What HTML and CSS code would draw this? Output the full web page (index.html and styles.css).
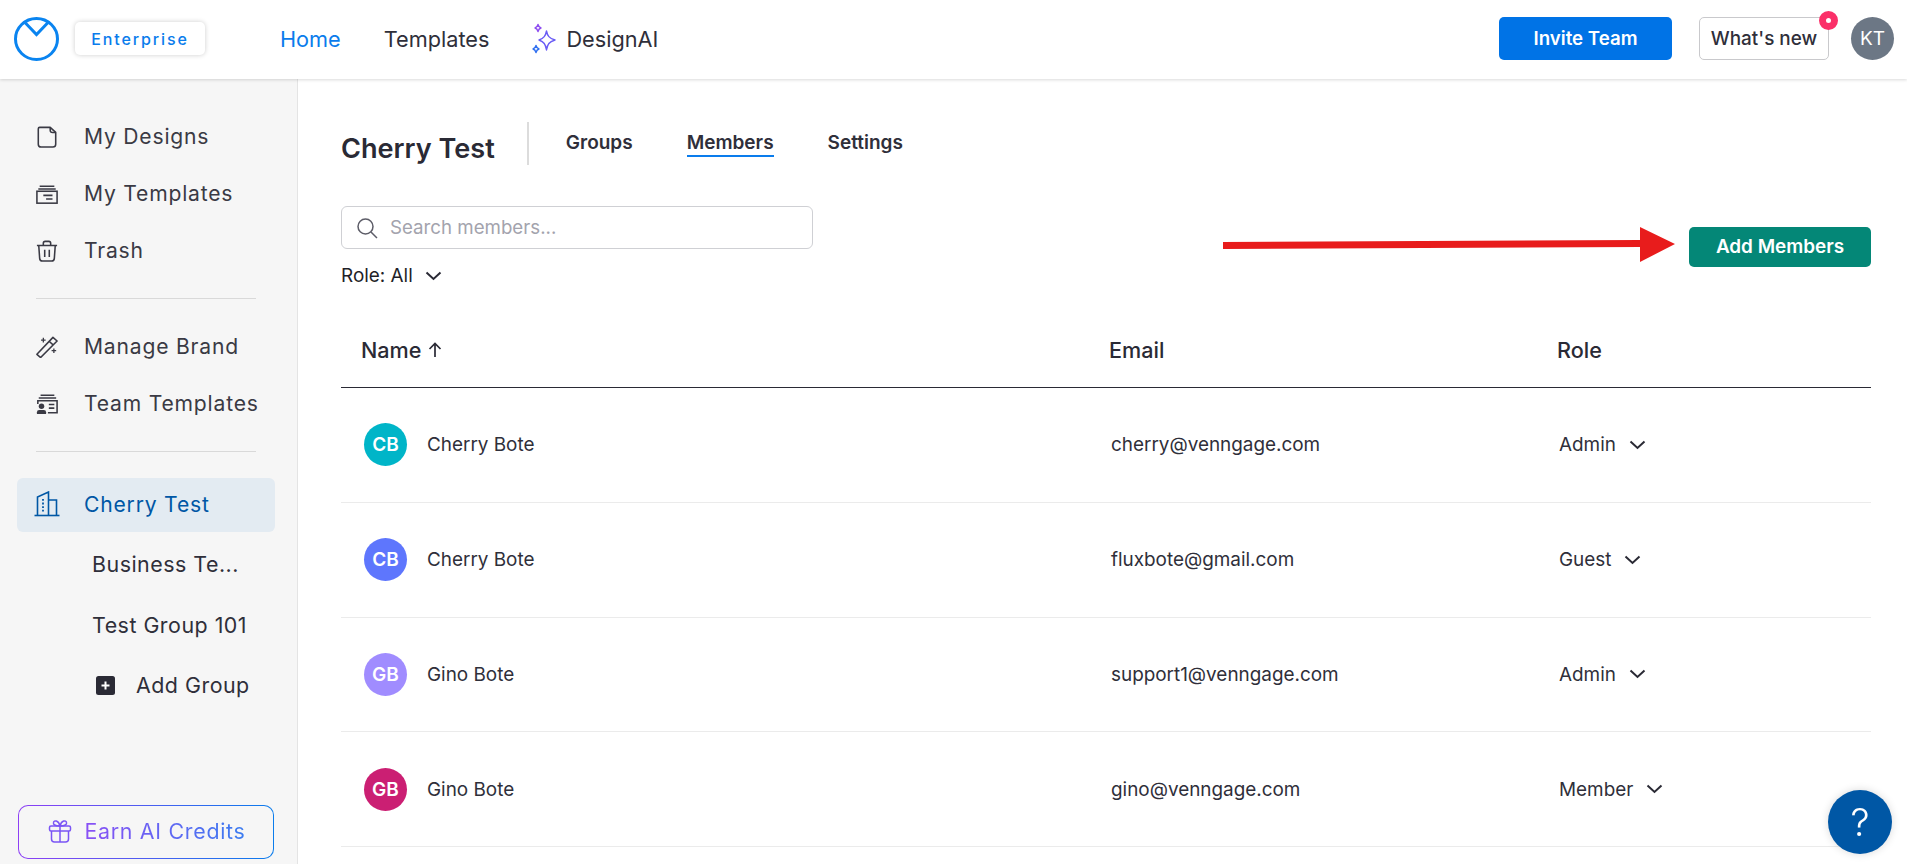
FILE: index.html
```html
<!DOCTYPE html>
<html lang="en">
<head>
    <meta charset="UTF-8">
    <title>Cherry Test - Members</title>
    <link rel="stylesheet" href="styles.css">
</head>
<body>
    <header class="topbar">
        <svg class="logo" width="45" height="44" viewBox="0 0 45 44" fill="none" stroke="#0a84f0" stroke-width="3">
            <ellipse cx="22.5" cy="22" rx="21" ry="20.5"/>
            <path d="M10 4.500 L22.500 17.500 L35 4.500"/>
        </svg>
        <div class="plan-badge">Enterprise</div>
        <nav class="top-nav">
            <a class="top-link active">Home</a>
            <a class="top-link">Templates</a>
            <a class="top-link ai-link">
                <svg width="24" height="32" viewBox="0 0 24 32" fill="none" stroke="#6a5cf5" stroke-width="1.4" stroke-linejoin="round">
                    <path d="M14.5 8 C15.5 13 17 15 23 17 C17 19 15.5 21 14.5 27 C13.5 21 12 19 7 17 C12 15 13.5 13 14.5 8 Z"/>
                    <path d="M6 1.500 C6.500 3.500 7 4.500 9 5 C7 5.500 6.500 6.500 6 8.500 C5.500 6.500 5 5.500 3 5 C5 4.500 5.500 3.500 6 1.500 Z" stroke="#8e4df0"/>
                    <path d="M4 22.500 C4.500 24.500 5 25.500 7 26 C5 26.500 4.500 27.500 4 29.500 C3.500 27.500 3 26.500 1 26 C3 25.500 3.500 24.500 4 22.500 Z" stroke="#2f6ff0"/>
                </svg>
                DesignAI
            </a>
        </nav>
        <div class="top-actions">
            <button class="invite-button">Invite Team</button>
            <button class="news-button">What's new<span class="news-dot"></span></button>
            <div class="user-avatar">KT</div>
        </div>
    </header>

    <div class="layout">
        <aside class="sidebar">
            <a class="side-link">
                <svg class="side-icon" viewBox="0 0 24 24" fill="none" stroke="#3a3a44" stroke-width="1.700" stroke-linejoin="round">
                    <path d="M4 1.500 H15.500 L21.500 7 V20 Q21.500 23 18.500 23 H5.500 Q2.500 23 2.500 20 V3 Q2.500 1.500 4 1.500 Z"/>
                    <path d="M15.500 1.500 V4.500 Q15.500 7 18 7 H21.500"/>
                </svg>
                My Designs
            </a>
            <a class="side-link">
                <svg class="side-icon" viewBox="0 0 24 24" fill="none" stroke="#3a3a44" stroke-width="1.700">
                    <path d="M4 3.500 H20 M2.500 6.500 H21.500"/>
                    <rect x="1" y="9" width="22" height="13"/>
                    <path d="M8 13.500 H18 M11 17.500 H18"/>
                </svg>
                My Templates
            </a>
            <a class="side-link">
                <svg class="side-icon" viewBox="0 0 24 24" fill="none" stroke="#3a3a44" stroke-width="1.700" stroke-linejoin="round">
                    <path d="M1 6 H23 M8 6 V3.500 Q8 1.500 10 1.500 H14 Q16 1.500 16 3.500 V6"/>
                    <path d="M3 6 L4 20 Q4.200 23 7 23 H17 Q19.800 23 20 20 L21 6"/>
                    <path d="M9.500 10.500 V18.500 M14.500 10.500 V18.500"/>
                </svg>
                Trash
            </a>
            <hr class="side-divider">
            <a class="side-link">
                <svg class="side-icon" viewBox="0 0 24 24" fill="none" stroke="#3a3a44" stroke-width="1.700" stroke-linejoin="round">
                    <path d="M1 20 L18.500 1.500 L23 5.500 L5 23.500 Z M14.500 6 L19 10"/>
                    <path d="M8 2 V7 M5.500 4.500 H10.500 M19.500 13.500 V18.500 M17 16 H22" stroke-width="1.400"/>
                </svg>
                Manage Brand
            </a>
            <a class="side-link">
                <svg class="side-icon" viewBox="0 0 24 24" fill="none" stroke="#3a3a44" stroke-width="1.700">
                    <path d="M5 2.500 H20 M3 5.500 H22"/>
                    <path d="M2 12 V8.500 H23 V21.500 H13"/>
                    <path d="M14 12.500 H20 M14 16.500 H20"/>
                    <circle cx="6" cy="14.500" r="3" fill="#3a3a44" stroke="none"/>
                    <path d="M1 23 V21 Q1 18.500 3.500 18.500 H8.500 Q11 18.500 11 21 V23 Z" fill="#3a3a44" stroke="none"/>
                </svg>
                Team Templates
            </a>
            <hr class="side-divider">
            <a class="side-link team-link">
                <svg class="side-icon" viewBox="0 0 26 26" fill="none" stroke="#0057a5" stroke-width="1.600">
                    <path d="M0.500 24.500 H25.500"/>
                    <path d="M3.500 24.500 V6 L14.500 1 V24.500"/>
                    <path d="M14.500 9 H22.500 V24.500"/>
                    <path d="M9 8 V21" stroke-width="1.800" stroke-dasharray="1.800 1.800"/>
                </svg>
                Cherry Test
            </a>
            <a class="group-link">Business Te...</a>
            <a class="group-link">Test Group 101</a>
            <a class="group-link add-group">
                <svg width="19" height="19" viewBox="0 0 19 19">
                    <rect width="19" height="19" rx="2.500" fill="#2a2a35"/>
                    <path d="M9.500 5.500 V13.500 M5.500 9.500 H13.500" stroke="#fff" stroke-width="2"/>
                </svg>
                Add Group
            </a>
            <button class="credits-button">
                <svg width="24" height="24" viewBox="0 0 24 24" fill="none" stroke="#7b55f5" stroke-width="1.500" stroke-linejoin="round">
                    <rect x="1.500" y="7" width="21" height="5" rx="1.500"/>
                    <path d="M3.500 12 V20 Q3.500 23 6.500 23 H17.500 Q20.500 23 20.500 20 V12 M12 7 V23"/>
                    <path d="M12 7 C7 7 5 5.500 5.500 3.500 C6 1 10.500 1 12 7 C13.500 1 18 1 18.500 3.500 C19 5.500 17 7 12 7 Z"/>
                </svg>
                <span class="credits-text">Earn AI Credits</span>
            </button>
        </aside>

        <main class="content">
            <div class="team-header">
                <h1 class="team-name">Cherry Test</h1>
                <nav class="team-tabs">
                    <a class="team-tab">Groups</a>
                    <a class="team-tab active">Members</a>
                    <a class="team-tab">Settings</a>
                </nav>
            </div>

            <div class="toolbar">
                <div class="filters">
                    <div class="search-box">
                        <svg width="22" height="22" viewBox="0 0 22 22" fill="none" stroke="#5d5d68" stroke-width="1.500">
                            <circle cx="9.500" cy="9.500" r="7.500"/>
                            <path d="M15 15 L21 21"/>
                        </svg>
                        <input class="search-input" type="text" placeholder="Search members...">
                    </div>
                    <div class="role-filter">
                        Role: All
                        <svg class="chevron" width="17" height="10" viewBox="0 0 17 10" fill="none" stroke="#2a2a35" stroke-width="2">
                            <path d="M1.500 1.500 L8.500 8 L15.500 1.500"/>
                        </svg>
                    </div>
                </div>
                <button class="add-button">Add Members</button>
                <svg class="annotation-arrow" width="452" height="36" viewBox="0 0 452 36">
                    <path d="M0 15 L417 13 L417 0 L452 17 L417 35 L417 20 L0 22 Z" fill="#e81c1c"/>
                </svg>
            </div>

            <div class="members-table">
                <div class="table-row table-head">
                    <div class="name-head">Name
                        <svg width="14" height="16" viewBox="0 0 14 16" fill="none" stroke="#2a2a35" stroke-width="1.700">
                            <path d="M7 15 V1.500 M1.500 7 L7 1.500 L12.500 7"/>
                        </svg>
                    </div>
                    <div>Email</div>
                    <div>Role</div>
                </div>
                <div class="table-row">
                    <div class="member"><span class="avatar teal">CB</span>Cherry Bote</div>
                    <div class="email">cherry@venngage.com</div>
                    <div class="role">Admin
                        <svg class="chevron" width="17" height="10" viewBox="0 0 17 10" fill="none" stroke="#2a2a35" stroke-width="2"><path d="M1.500 1.500 L8.500 8 L15.500 1.500"/></svg>
                    </div>
                </div>
                <div class="table-row">
                    <div class="member"><span class="avatar blue">CB</span>Cherry Bote</div>
                    <div class="email">fluxbote@gmail.com</div>
                    <div class="role">Guest
                        <svg class="chevron" width="17" height="10" viewBox="0 0 17 10" fill="none" stroke="#2a2a35" stroke-width="2"><path d="M1.500 1.500 L8.500 8 L15.500 1.500"/></svg>
                    </div>
                </div>
                <div class="table-row">
                    <div class="member"><span class="avatar purple">GB</span>Gino Bote</div>
                    <div class="email">support1@venngage.com</div>
                    <div class="role">Admin
                        <svg class="chevron" width="17" height="10" viewBox="0 0 17 10" fill="none" stroke="#2a2a35" stroke-width="2"><path d="M1.500 1.500 L8.500 8 L15.500 1.500"/></svg>
                    </div>
                </div>
                <div class="table-row">
                    <div class="member"><span class="avatar pink">GB</span>Gino Bote</div>
                    <div class="email">gino@venngage.com</div>
                    <div class="role">Member
                        <svg class="chevron" width="17" height="10" viewBox="0 0 17 10" fill="none" stroke="#2a2a35" stroke-width="2"><path d="M1.500 1.500 L8.500 8 L15.500 1.500"/></svg>
                    </div>
                </div>
            </div>
        </main>
    </div>

    <button class="help-button">?</button>
</body>
</html>
```
FILE: styles.css
```css
html, body {
    height: 100%;
}
body {
    margin: 0;
    overflow: hidden;
    font-family: 'Inter', sans-serif;
    color: #2a2a35;
    background: #fff;
    display: flex;
    flex-direction: column;
}
button {
    font-family: inherit;
    cursor: pointer;
}

/* Top bar */
.topbar {
    height: 79px;
    flex-shrink: 0;
    display: flex;
    align-items: center;
    padding: 0 13px 2px 14px;
    box-sizing: border-box;
    background: #fff;
    box-shadow: 0 1px 3px rgba(0,0,0,0.15);
    position: relative;
    z-index: 1;
}
.plan-badge {
    margin-left: 16px;
    width: 130px;
    height: 33px;
    display: flex;
    align-items: center;
    justify-content: center;
    border-radius: 5px;
    box-shadow: 0 0 5px rgba(0,0,0,0.2);
    color: #0a7cec;
    font-size: 16px;
    font-weight: 500;
    letter-spacing: 1.900px;
}
.top-nav {
    display: flex;
    align-items: center;
    gap: 43px;
    margin-left: 75px;
}
.top-link {
    font-size: 21.700px;
    color: #2f2f3a;
}
.top-link.active {
    color: #0a7cec;
}
.ai-link {
    display: flex;
    align-items: center;
    gap: 10px;
}
.top-actions {
    margin-left: auto;
    display: flex;
    align-items: center;
}
.invite-button {
    width: 173px;
    height: 43px;
    border: none;
    border-radius: 5px;
    background: #0073e6;
    color: #fff;
    font-size: 18.700px;
    font-weight: 600;
}
.news-button {
    position: relative;
    margin-left: 27px;
    width: 130px;
    height: 43px;
    border: 1px solid #c9c9cc;
    border-radius: 5px;
    background: #fff;
    color: #2f2f3a;
    font-size: 18.900px;
    font-weight: 500;
    padding: 0;
}
.news-dot {
    position: absolute;
    top: -7px;
    right: -10px;
    width: 5px;
    height: 5px;
    border: 7px solid #fb3069;
    border-radius: 50%;
    background: #fff;
}
.user-avatar {
    margin-left: 22px;
    width: 43px;
    height: 43px;
    border-radius: 50%;
    background: #6c7785;
    color: #fff;
    display: flex;
    align-items: center;
    justify-content: center;
    font-size: 19px;
}

.layout {
    flex: 1;
    min-height: 0;
    display: flex;
}

/* Sidebar */
.sidebar {
    width: 298px;
    flex-shrink: 0;
    box-sizing: border-box;
    padding: 29px 22px 5px 17px;
    background: #f6f6f6;
    border-right: 1px solid #e4e4e4;
    display: flex;
    flex-direction: column;
}
.side-link {
    height: 57px;
    display: flex;
    align-items: center;
    gap: 26px;
    padding-left: 19px;
    font-size: 21.100px;
    letter-spacing: 0.800px;
    color: #3a3a44;
}
.side-icon {
    width: 22px;
    height: 22px;
    flex-shrink: 0;
}
.side-divider {
    width: 220px;
    margin: 19px 0 19px 19px;
    border: none;
    border-top: 1px solid #d9d9d9;
}
.side-divider:nth-of-type(2) {
    margin-bottom: 26px;
}
.team-link {
    height: 54px;
    padding-bottom: 2px;
    box-sizing: border-box;
    margin-bottom: 1px;
    border-radius: 6px;
    background: #e3ebf2;
    color: #0057a5;
}
.team-link .side-icon {
    width: 26px;
    height: 26px;
    margin-left: -2px;
    margin-right: -2px;
}
.group-link {
    height: 61px;
    display: flex;
    align-items: center;
    padding-left: 75px;
    font-size: 21.400px;
    letter-spacing: 0.500px;
    color: #2f2f3a;
}
.add-group {
    gap: 21px;
    padding-left: 79px;
    height: 60px;
}
.credits-button {
    margin-top: auto;
    margin-left: 1px;
    width: 256px;
    height: 54px;
    flex-shrink: 0;
    display: flex;
    align-items: center;
    justify-content: center;
    gap: 12px;
    border: 1px solid transparent;
    border-radius: 10px;
    background: linear-gradient(#f6f6f6, #f6f6f6) padding-box, linear-gradient(to right, #8e3ff5, #0a7cec) border-box;
    padding: 0 0 2px 2px;
}
.credits-text {
    font-size: 21.400px;
    letter-spacing: 0.700px;
    background: linear-gradient(to right, #8a50f5, #3a7cf0);
    -webkit-background-clip: text;
    background-clip: text;
    color: transparent;
}

/* Main content */
.content {
    flex: 1;
    min-width: 0;
    padding: 43px 36px 0 43px;
}
.team-header {
    display: flex;
    align-items: stretch;
    height: 43px;
}
.team-name {
    margin: 0;
    padding: 5px 32px 0 0;
    font-size: 27.100px;
    line-height: 43px;
    font-weight: 600;
    height: 38px;
    color: #2a2a35;
}
.team-tabs {
    display: flex;
    gap: 54px;
    border-left: 2px solid #dcdcdc;
    padding-left: 37px;
}
.team-tab {
    height: 35px;
    box-sizing: border-box;
    padding-top: 8px;
    font-size: 19px;
    line-height: 26px;
    font-weight: 600;
    color: #2f2f3a;
}
.team-tab.active {
    border-bottom: 2px solid #0a7cec;
}
.toolbar {
    position: relative;
    margin-top: 41px;
    display: flex;
    align-items: center;
    justify-content: space-between;
}
.search-box {
    width: 472px;
    height: 43px;
    box-sizing: border-box;
    display: flex;
    align-items: center;
    gap: 10px;
    padding-left: 14px;
    border: 1px solid #cfd0d4;
    border-radius: 6px;
}
.search-input {
    flex: 1;
    min-width: 0;
    border: none;
    outline: none;
    font-family: inherit;
    font-size: 18.700px;
    color: #2a2a35;
    background: transparent;
}
.search-input::placeholder {
    color: #a3a3ad;
}
.role-filter {
    margin-top: 14px;
    display: flex;
    align-items: center;
    gap: 12px;
    font-size: 18.900px;
    line-height: 25px;
    color: #1f1f28;
}
.add-button {
    width: 182px;
    height: 40px;
    margin-top: -1px;
    border: none;
    border-radius: 5px;
    background: #048777;
    color: #fff;
    font-size: 18.900px;
    font-weight: 600;
    padding: 0;
}
.annotation-arrow {
    position: absolute;
    left: 882px;
    top: 21px;
}

/* Members table */
.members-table {
    margin-top: 25px;
}
.table-row {
    display: grid;
    grid-template-columns: 768px 448px 1fr;
    align-items: center;
    height: 114.750px;
    box-sizing: border-box;
    border-bottom: 1px solid #ebebeb;
    font-size: 18.900px;
    color: #2f2f3a;
}
.table-head {
    height: 75px;
    border-bottom-color: #2a2a35;
    font-size: 21.600px;
    font-weight: 500;
    color: #2a2a35;
}
.name-head {
    display: flex;
    align-items: center;
    gap: 7px;
    padding-left: 20px;
}
.member {
    display: flex;
    align-items: center;
    gap: 20px;
    padding-left: 23px;
}
.avatar {
    width: 43px;
    height: 43px;
    border-radius: 50%;
    display: flex;
    align-items: center;
    justify-content: center;
    color: #fff;
    font-size: 19px;
    font-weight: 600;
}
.teal { background: #00b5c8; }
.blue { background: #5e76fd; }
.purple { background: #a08cff; }
.pink { background: #cb1f73; }
.email {
    padding-left: 2px;
}
.role {
    display: flex;
    align-items: center;
    gap: 13px;
    padding-left: 2px;
}
.help-button {
    position: fixed;
    right: 15px;
    bottom: 10px;
    width: 64px;
    height: 64px;
    border: none;
    border-radius: 50%;
    background: #0057a5;
    color: #fff;
    font-size: 38px;
    font-weight: 300;
    box-shadow: 0 0 8px rgba(0,0,0,0.15);
    padding: 0;
}
```
